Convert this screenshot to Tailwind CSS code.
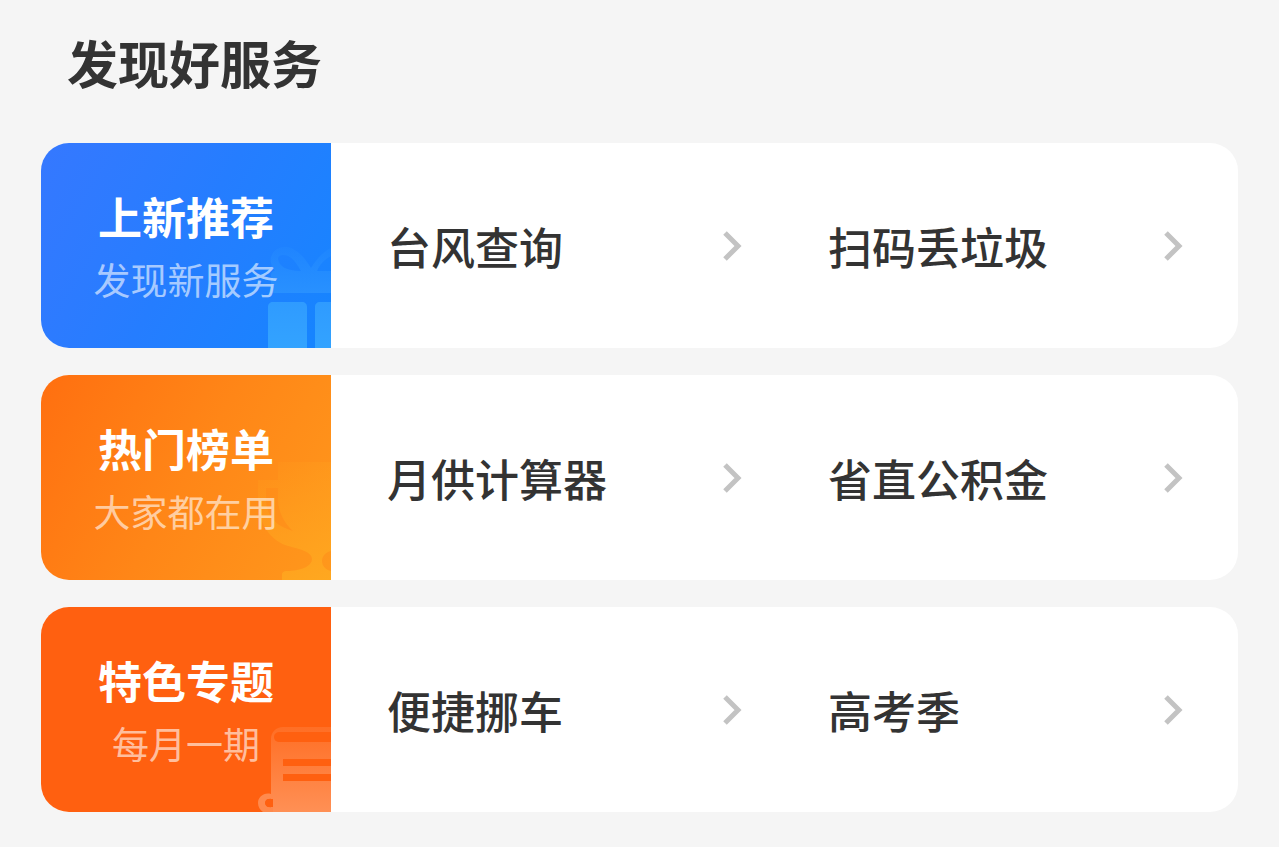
<!DOCTYPE html>
<html lang="zh-CN">
<head>
    <meta charset="UTF-8">
    <meta name="viewport" content="width=device-width, initial-scale=1.0">
    <title>发现好服务</title>
    <script src="https://cdn.jsdelivr.net/npm/@tailwindcss/browser@4"></script>
</head>
<body class="min-h-screen bg-[#f5f5f5] text-[#333333] font-['Noto_Sans_CJK_SC',sans-serif]">
    <main class="px-[41px] pt-6 pb-9">
        <h1 class="pl-[26px] mb-[43px] text-[51px] leading-[76px] font-bold">发现好服务</h1>

        <div class="flex flex-col gap-[27px]">
            <!-- New services -->
            <section class="flex h-[205px] rounded-[28px] overflow-hidden bg-white">
                <div class="relative w-[290px] shrink-0 flex flex-col items-center justify-center pt-1 text-white bg-linear-120 from-[#3578ff] via-[#257dff] to-[#1485ff]">
                    <svg class="absolute right-0 bottom-0 w-20 h-[120px]" viewBox="0 0 80 120" fill="none" aria-hidden="true">
                        <defs>
                            <linearGradient id="gift-lid" x1="0" y1="16" x2="0" y2="65" gradientUnits="userSpaceOnUse">
                                <stop stop-color="#2a92ff" stop-opacity="0.15" />
                                <stop offset="1" stop-color="#2a92ff" stop-opacity="0.9" />
                            </linearGradient>
                            <linearGradient id="gift-box" x1="0" y1="74" x2="0" y2="120" gradientUnits="userSpaceOnUse">
                                <stop stop-color="#2f9bff" />
                                <stop offset="1" stop-color="#33a3ff" />
                            </linearGradient>
                        </defs>
                        <path d="M20 65V48c0-3 1-5 4-5-4-5-5-10-4-14 3-9 13-13 22-8 8 4 13 11 18 19 5-8 11-16 20-20v8c-6 3-11 8-14 15h14v22Z M27 31c1 7 8 12 23 12-4-7-8-13-13-15-5-2-10-1-10 3Z" fill="url(#gift-lid)" fill-rule="evenodd" />
                        <path d="M17 120V79c0-3 2-5 5-5h29c3 0 5 2 5 5v41Z M64 120V79c0-3 2-5 5-5h11v46Z" fill="url(#gift-box)" />
                    </svg>
                    <h2 class="relative text-[44px] leading-[63px] font-bold">上新推荐</h2>
                    <p class="relative text-[37px] leading-[63px] font-normal text-white/60">发现新服务</p>
                </div>
                <div class="flex flex-1 pr-[25px]">
                    <a href="#" class="flex flex-1 items-center justify-between pl-14 pr-[30px] text-[44px] font-medium">
                        台风查询
                        <svg class="w-5 h-[30px]" viewBox="0 0 20 30" fill="none" stroke="#c3c3c3" stroke-width="5" aria-hidden="true"><path d="M3 2l13 13-13 13" /></svg>
                    </a>
                    <a href="#" class="flex flex-1 items-center justify-between pl-14 pr-[30px] text-[44px] font-medium">
                        扫码丢垃圾
                        <svg class="w-5 h-[30px]" viewBox="0 0 20 30" fill="none" stroke="#c3c3c3" stroke-width="5" aria-hidden="true"><path d="M3 2l13 13-13 13" /></svg>
                    </a>
                </div>
            </section>

            <!-- Hot list -->
            <section class="flex h-[205px] rounded-[28px] overflow-hidden bg-white">
                <div class="relative w-[290px] shrink-0 flex flex-col items-center justify-center pt-1 text-white bg-linear-120 from-[#ff6f10] via-[#ff8617] to-[#ff981c]">
                    <svg class="absolute right-0 bottom-0 w-20 h-[120px]" viewBox="0 0 80 120" fill="none" aria-hidden="true">
                        <defs>
                            <linearGradient id="cup" x1="20" y1="0" x2="70" y2="120" gradientUnits="userSpaceOnUse">
                                <stop stop-color="#ffa51f" stop-opacity="0.1" />
                                <stop offset="1" stop-color="#ffaa20" stop-opacity="0.85" />
                            </linearGradient>
                        </defs>
                        <path d="M27 2h53v89c-5 1-9 5-9 10s4 9 9 10v9H31v-5c0-3 2-4 5-4 12 0 25-4 25-12 0-7-12-10-24-13C20 81 7 64 7 39V20h20Z M27 28H15v11c0 16 9 27 27 32-9-8-15-20-15-32Z" fill="url(#cup)" fill-rule="evenodd" />
                    </svg>
                    <h2 class="relative text-[44px] leading-[63px] font-bold">热门榜单</h2>
                    <p class="relative text-[37px] leading-[63px] font-normal text-white/60">大家都在用</p>
                </div>
                <div class="flex flex-1 pr-[25px]">
                    <a href="#" class="flex flex-1 items-center justify-between pl-14 pr-[30px] text-[44px] font-medium">
                        月供计算器
                        <svg class="w-5 h-[30px]" viewBox="0 0 20 30" fill="none" stroke="#c3c3c3" stroke-width="5" aria-hidden="true"><path d="M3 2l13 13-13 13" /></svg>
                    </a>
                    <a href="#" class="flex flex-1 items-center justify-between pl-14 pr-[30px] text-[44px] font-medium">
                        省直公积金
                        <svg class="w-5 h-[30px]" viewBox="0 0 20 30" fill="none" stroke="#c3c3c3" stroke-width="5" aria-hidden="true"><path d="M3 2l13 13-13 13" /></svg>
                    </a>
                </div>
            </section>

            <!-- Monthly topics -->
            <section class="flex h-[205px] rounded-[28px] overflow-hidden bg-white">
                <div class="relative w-[290px] shrink-0 flex flex-col items-center justify-center pt-1 text-white bg-[#ff6010]">
                    <svg class="absolute right-0 bottom-0 w-20 h-[120px]" viewBox="0 0 80 120" fill="none" aria-hidden="true">
                        <defs>
                            <linearGradient id="scroll" x1="0" y1="35" x2="0" y2="120" gradientUnits="userSpaceOnUse">
                                <stop stop-color="#ff9055" stop-opacity="0.3" />
                                <stop offset="1" stop-color="#ff9055" />
                            </linearGradient>
                        </defs>
                        <path d="M20 120V47c0-7 5-12 12-12h48v5H29c-4 0-6 2-6 5s2 5 6 5h51v17H32v7h48v8H32v7h48v31Z" fill="url(#scroll)" />
                        <path d="M20 102c-7-2-13 3-13 9 0 4 2 7 5 9h10v-5c-5 1-8-1-8-4s3-5 8-4Z" fill="#ff8a4d" />
                        <path d="M17 107h5v8h-5c-3-1-4-7 0-8Z" fill="#ff6010" />
                    </svg>
                    <h2 class="relative text-[44px] leading-[63px] font-bold">特色专题</h2>
                    <p class="relative text-[37px] leading-[63px] font-normal text-white/60">每月一期</p>
                </div>
                <div class="flex flex-1 pr-[25px]">
                    <a href="#" class="flex flex-1 items-center justify-between pl-14 pr-[30px] text-[44px] font-medium">
                        便捷挪车
                        <svg class="w-5 h-[30px]" viewBox="0 0 20 30" fill="none" stroke="#c3c3c3" stroke-width="5" aria-hidden="true"><path d="M3 2l13 13-13 13" /></svg>
                    </a>
                    <a href="#" class="flex flex-1 items-center justify-between pl-14 pr-[30px] text-[44px] font-medium">
                        高考季
                        <svg class="w-5 h-[30px]" viewBox="0 0 20 30" fill="none" stroke="#c3c3c3" stroke-width="5" aria-hidden="true"><path d="M3 2l13 13-13 13" /></svg>
                    </a>
                </div>
            </section>
        </div>
    </main>
</body>
</html>
